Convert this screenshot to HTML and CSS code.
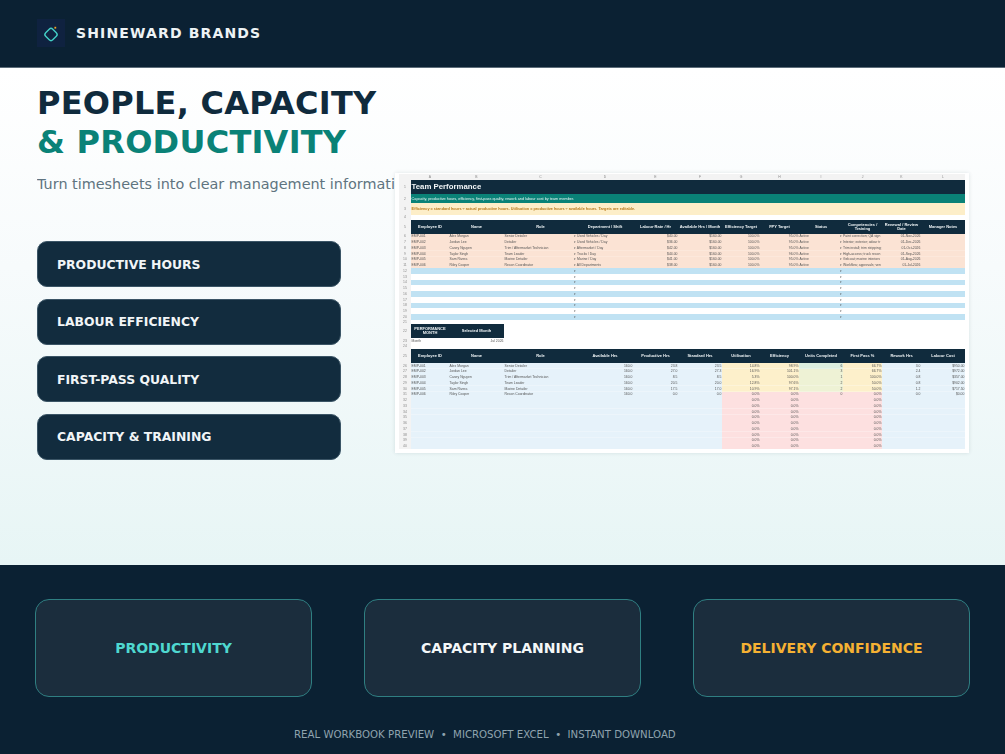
FILE: index.html
```html
<!DOCTYPE html>
<html lang="en">
<head>
  <meta charset="UTF-8">
  <title>People, Capacity &amp; Productivity</title>
  <link rel="stylesheet" href="styles.css">
</head>
<body>
<header class="topbar">
  <div class="logo">
    <svg viewBox="0 0 28 28" width="28" height="28">
      <rect x="9" y="10.5" width="10" height="10" rx="2.5" transform="rotate(45 14 15.5)" fill="none" stroke="#43cfc6" stroke-width="1.4"/>
      <rect x="17.4" y="7.8" width="1.8" height="1.8" fill="#f5a623"/>
    </svg>
  </div>
  <span class="brand">SHINEWARD BRANDS</span>
</header>

<main class="hero">
  <!-- left column -->
  <section class="intro">
    <h1>PEOPLE, CAPACITY<br><span class="accent">&amp; PRODUCTIVITY</span></h1>
    <p class="sub">Turn timesheets into clear management information</p>
    <ul class="pills">
      <li>PRODUCTIVE HOURS</li>
      <li>LABOUR EFFICIENCY</li>
      <li>FIRST-PASS QUALITY</li>
      <li>CAPACITY &amp; TRAINING</li>
    </ul>
  </section>

  <!-- workbook preview -->
  <section class="sheet">
    <table>
      <colgroup>
        <col class="c-n"><col class="c-a"><col class="c-b"><col class="c-c"><col class="c-d"><col class="c-e"><col class="c-f">
        <col class="c-g"><col class="c-h"><col class="c-i"><col class="c-j"><col class="c-k"><col class="c-l">
      </colgroup>
      <tr class="letters"><th></th><th>A</th><th>B</th><th>C</th><th>D</th><th>E</th><th>F</th><th>G</th><th>H</th><th>I</th><th>J</th><th>K</th><th>L</th></tr>
      <tr class="title"><th>1</th><td colspan="12">Team Performance</td></tr>
      <tr class="subtitle"><th>2</th><td colspan="12">Capacity, productive hours, efficiency, first-pass quality, rework and labour cost by team member.</td></tr>
      <tr class="note"><th>3</th><td colspan="12">Efficiency = standard hours ÷ actual productive hours. Utilisation = productive hours ÷ available hours. Targets are editable.</td></tr>
      <tr class="gap"><th>4</th><td colspan="12"></td></tr>
      <tr class="head"><th>5</th><td>Employee ID</td><td>Name</td><td>Role</td><td>Department / Shift</td><td>Labour Rate / Hr</td><td>Available Hrs / Month</td><td>Efficiency Target</td><td>FPY Target</td><td>Status</td><td>Competencies / Training</td><td>Renewal / Review Date</td><td>Manager Notes</td></tr>
      <tr class="row peach"><th>6</th><td>EMP-001</td><td>Alex Morgan</td><td>Senior Detailer</td><td class="dd">▾ Used Vehicles / Day</td><td class="r">$40.00</td><td class="r">$160.00</td><td class="r">100.0%</td><td class="r">95.0%</td><td>Active</td><td class="dd">▾ Paint correction; QA sign</td><td class="r">01-Nov-2026</td><td></td></tr>
      <tr class="row peach"><th>7</th><td>EMP-002</td><td>Jordan Lee</td><td>Detailer</td><td class="dd">▾ Used Vehicles / Day</td><td class="r">$36.00</td><td class="r">$160.00</td><td class="r">100.0%</td><td class="r">95.0%</td><td>Active</td><td class="dd">▾ Interior; exterior; odour tr</td><td class="r">01-Dec-2026</td><td></td></tr>
      <tr class="row peach"><th>8</th><td>EMP-003</td><td>Casey Nguyen</td><td>Trim / Aftermarket Technician</td><td class="dd">▾ Aftermarket / Day</td><td class="r">$42.00</td><td class="r">$160.00</td><td class="r">100.0%</td><td class="r">95.0%</td><td>Active</td><td class="dd">▾ Trim install; trim stripping;</td><td class="r">01-Oct-2026</td><td></td></tr>
      <tr class="row peach"><th>9</th><td>EMP-004</td><td>Taylor Singh</td><td>Team Leader</td><td class="dd">▾ Trucks / Day</td><td class="r">$44.00</td><td class="r">$160.00</td><td class="r">100.0%</td><td class="r">96.0%</td><td>Active</td><td class="dd">▾ High-access; truck recon</td><td class="r">01-Sep-2026</td><td></td></tr>
      <tr class="row peach"><th>10</th><td>EMP-005</td><td>Sam Rivera</td><td>Marine Detailer</td><td class="dd">▾ Marine / Day</td><td class="r">$41.00</td><td class="r">$160.00</td><td class="r">100.0%</td><td class="r">95.0%</td><td>Active</td><td class="dd">▾ Gelcoat; marine interiors</td><td class="r">01-Aug-2026</td><td></td></tr>
      <tr class="row peach"><th>11</th><td>EMP-006</td><td>Riley Cooper</td><td>Recon Coordinator</td><td class="dd">▾ All Departments</td><td class="r">$38.00</td><td class="r">$160.00</td><td class="r">100.0%</td><td class="r">95.0%</td><td>Active</td><td class="dd">▾ Workflow; approvals; ven</td><td class="r">01-Jul-2026</td><td></td></tr>
      <tr class="row sky"><th>12</th><td colspan="3"></td><td class="dd">▾</td><td colspan="5"></td><td class="dd" colspan="3">▾</td></tr>
      <tr class="row"><th>13</th><td colspan="3"></td><td class="dd">▾</td><td colspan="5"></td><td class="dd" colspan="3">▾</td></tr>
      <tr class="row sky"><th>14</th><td colspan="3"></td><td class="dd">▾</td><td colspan="5"></td><td class="dd" colspan="3">▾</td></tr>
      <tr class="row"><th>15</th><td colspan="3"></td><td class="dd">▾</td><td colspan="5"></td><td class="dd" colspan="3">▾</td></tr>
      <tr class="row sky"><th>16</th><td colspan="3"></td><td class="dd">▾</td><td colspan="5"></td><td class="dd" colspan="3">▾</td></tr>
      <tr class="row"><th>17</th><td colspan="3"></td><td class="dd">▾</td><td colspan="5"></td><td class="dd" colspan="3">▾</td></tr>
      <tr class="row sky"><th>18</th><td colspan="3"></td><td class="dd">▾</td><td colspan="5"></td><td class="dd" colspan="3">▾</td></tr>
      <tr class="row"><th>19</th><td colspan="3"></td><td class="dd">▾</td><td colspan="5"></td><td class="dd" colspan="3">▾</td></tr>
      <tr class="row sky"><th>20</th><td colspan="3"></td><td class="dd">▾</td><td colspan="5"></td><td class="dd" colspan="3">▾</td></tr>
      <tr class="gap"><th>21</th><td colspan="12"></td></tr>
      <tr class="head"><th>22</th><td>PERFORMANCE MONTH</td><td>Selected Month</td><td class="blank" colspan="10"></td></tr>
      <tr class="row"><th>23</th><td>Month</td><td class="r">Jul 2026</td><td colspan="10"></td></tr>
      <tr class="gap"><th>24</th><td colspan="12"></td></tr>
      <tr class="head"><th>25</th><td>Employee ID</td><td>Name</td><td>Role</td><td>Available Hrs</td><td>Productive Hrs</td><td>Standard Hrs</td><td>Utilisation</td><td>Efficiency</td><td>Units Completed</td><td>First Pass %</td><td>Rework Hrs</td><td>Labour Cost</td></tr>
      <tr class="row ice"><th>26</th><td>EMP-001</td><td>Alex Morgan</td><td>Senior Detailer</td><td class="r">160.0</td><td class="r">23.8</td><td class="r">23.5</td><td class="r amber">14.8%</td><td class="r amber">98.9%</td><td class="r mint">6</td><td class="r amber">66.7%</td><td class="r">3.0</td><td class="r">$950.00</td></tr>
      <tr class="row ice"><th>27</th><td>EMP-002</td><td>Jordan Lee</td><td>Detailer</td><td class="r">160.0</td><td class="r">27.0</td><td class="r">27.3</td><td class="r amber">16.9%</td><td class="r amber">101.1%</td><td class="r lime">3</td><td class="r amber">66.7%</td><td class="r">2.4</td><td class="r">$972.00</td></tr>
      <tr class="row ice"><th>28</th><td>EMP-003</td><td>Casey Nguyen</td><td>Trim / Aftermarket Technician</td><td class="r">160.0</td><td class="r">8.5</td><td class="r">8.5</td><td class="r amber">5.3%</td><td class="r amber">100.0%</td><td class="r lime">1</td><td class="r amber">100.0%</td><td class="r">0.8</td><td class="r">$357.00</td></tr>
      <tr class="row ice"><th>29</th><td>EMP-004</td><td>Taylor Singh</td><td>Team Leader</td><td class="r">160.0</td><td class="r">20.5</td><td class="r">20.0</td><td class="r amber">12.8%</td><td class="r amber">97.6%</td><td class="r lime">2</td><td class="r amber">50.0%</td><td class="r">0.8</td><td class="r">$902.00</td></tr>
      <tr class="row ice"><th>30</th><td>EMP-005</td><td>Sam Rivera</td><td>Marine Detailer</td><td class="r">160.0</td><td class="r">17.5</td><td class="r">17.0</td><td class="r amber">10.9%</td><td class="r amber">97.1%</td><td class="r lime">2</td><td class="r amber">50.0%</td><td class="r">1.2</td><td class="r">$717.50</td></tr>
      <tr class="row ice"><th>31</th><td>EMP-006</td><td>Riley Cooper</td><td>Recon Coordinator</td><td class="r">160.0</td><td class="r">0.0</td><td class="r">0.0</td><td class="r rose">0.0%</td><td class="r rose">0.0%</td><td class="r rose">0</td><td class="r rose">0.0%</td><td class="r">0.0</td><td class="r">$0.00</td></tr>
      <tr class="row ice"><th>32</th><td colspan="6"></td><td class="r rose">0.0%</td><td class="r rose">0.0%</td><td class="rose"></td><td class="r rose">0.0%</td><td colspan="2"></td></tr>
      <tr class="row ice"><th>33</th><td colspan="6"></td><td class="r rose">0.0%</td><td class="r rose">0.0%</td><td class="rose"></td><td class="r rose">0.0%</td><td colspan="2"></td></tr>
      <tr class="row ice"><th>34</th><td colspan="6"></td><td class="r rose">0.0%</td><td class="r rose">0.0%</td><td class="rose"></td><td class="r rose">0.0%</td><td colspan="2"></td></tr>
      <tr class="row ice"><th>35</th><td colspan="6"></td><td class="r rose">0.0%</td><td class="r rose">0.0%</td><td class="rose"></td><td class="r rose">0.0%</td><td colspan="2"></td></tr>
      <tr class="row ice"><th>36</th><td colspan="6"></td><td class="r rose">0.0%</td><td class="r rose">0.0%</td><td class="rose"></td><td class="r rose">0.0%</td><td colspan="2"></td></tr>
      <tr class="row ice"><th>37</th><td colspan="6"></td><td class="r rose">0.0%</td><td class="r rose">0.0%</td><td class="rose"></td><td class="r rose">0.0%</td><td colspan="2"></td></tr>
      <tr class="row ice"><th>38</th><td colspan="6"></td><td class="r rose">0.0%</td><td class="r rose">0.0%</td><td class="rose"></td><td class="r rose">0.0%</td><td colspan="2"></td></tr>
      <tr class="row ice"><th>39</th><td colspan="6"></td><td class="r rose">0.0%</td><td class="r rose">0.0%</td><td class="rose"></td><td class="r rose">0.0%</td><td colspan="2"></td></tr>
      <tr class="row ice"><th>40</th><td colspan="6"></td><td class="r rose">0.0%</td><td class="r rose">0.0%</td><td class="rose"></td><td class="r rose">0.0%</td><td colspan="2"></td></tr>
    </table>
  </section>
</main>

<footer class="bottom">
  <div class="cards">
    <div class="card teal">PRODUCTIVITY</div>
    <div class="card">CAPACITY PLANNING</div>
    <div class="card gold">DELIVERY CONFIDENCE</div>
  </div>
  <p class="strap">REAL WORKBOOK PREVIEW &nbsp;•&nbsp; MICROSOFT EXCEL &nbsp;•&nbsp; INSTANT DOWNLOAD</p>
</footer>
</body>
</html>
```

FILE: styles.css
```css
*{box-sizing:border-box}
body{margin:0;height:754px;overflow:hidden;display:flex;flex-direction:column;font-family:"DejaVu Sans",sans-serif;background:#0b2133}

/* top bar */
.topbar{height:68px;flex:none;display:flex;align-items:center;gap:11px;padding:0 37px 1px;background:#0b2133;border-bottom:1px solid #5d6d7a}
.logo{width:28px;height:28px;background:#0f2240}
.logo svg{display:block}
.brand{font-size:14px;font-weight:700;letter-spacing:1.15px;color:#eef3f5}

/* hero */
.hero{height:497px;flex:none;display:flex;align-items:flex-start;padding-left:37px;background:linear-gradient(180deg,#fff 0%,#f7fbfc 40%,#e7f5f5 100%)}
.intro{width:358px;flex:none;overflow:hidden}
h1{margin:16px 0 0;font-size:32px;line-height:39px;font-weight:700;letter-spacing:.25px;color:#102b3d;white-space:nowrap}
.accent{color:#0a8277}
.sub{margin:12px 0 0;font-size:14.4px;line-height:20px;color:#5f7480;white-space:nowrap}
.pills{list-style:none;margin:47px 0 0;padding:0;width:304px;display:flex;flex-direction:column;gap:11.6px}
.pills li{height:46px;display:flex;align-items:center;padding-left:19px;border-radius:10px;background:#122c3e;border:1px solid #3b5566;font-size:12.4px;font-weight:700;color:#f1f5f7}

/* workbook preview */
.sheet{width:574px;height:280px;flex:none;margin-top:105px;padding:1px 4px 0;background:#fff;box-shadow:0 0 4px rgba(16,43,61,.12)}
.sheet table{width:566px;table-layout:fixed;border-collapse:separate;border-spacing:0;font-family:"Liberation Sans",Arial,sans-serif;font-size:3.4px;line-height:4px;color:#555;filter:blur(.35px)}
.c-n{width:12px}.c-a{width:38px}.c-b{width:55px}.c-c{width:73px}.c-d{width:56px}.c-e{width:45px}.c-f{width:44px}
.c-g{width:38px}.c-h{width:39px}.c-i{width:44px}.c-j{width:39px}.c-k{width:39px}.c-l{width:44px}
.sheet th{padding:0;font-weight:400;text-align:center;background:#f3f3f3;color:#888}
.sheet td{padding:0 .6px;white-space:nowrap;overflow:hidden}
.sheet td.dd{text-indent:-3.5px;overflow:visible}
.sheet .r{text-align:right}
.letters th{height:6px}
.title th,.title td{height:14px}
.title td{background:#102b3d;color:#f1f5f7;font-size:7.8px;font-weight:700;line-height:10px}
.subtitle th,.subtitle td{height:9px}
.subtitle td{background:#0a8277;color:#e8f5f3;font-size:3.8px}
.note th,.note td{height:12px}
.note td{background:#fdeec8;color:#b8791a;font-size:3.8px;font-weight:700}
.gap th,.gap td{height:4.6px}
.head th,.head td{height:14px}
.head td{background:#102b3d;color:#eef3f5;font-size:4px;font-weight:700;text-align:center;white-space:normal}
.head td.blank{background:#fff}
.row th,.row td{height:5.75px}
.peach td{background:#fbe3d4 linear-gradient(#fff5,#fff5) bottom/100% .5px no-repeat}
.sky td{background:#c0e2f3}
.ice td{background:#e6f2fa linear-gradient(#fff8,#fff8) bottom/100% .5px no-repeat}
.ice td.amber{background-color:#fdf0cb}
.ice td.mint{background-color:#dcefe0}
.ice td.lime{background-color:#eef2d5}
.ice td.rose{background-color:#fde0e0}

/* footer */
.bottom{flex:1;padding:34px 35px 0;background:#0b2133}
.cards{display:flex;gap:52px}
.card{width:277px;height:98px;display:flex;align-items:center;justify-content:center;border:1px solid #2f7f82;border-radius:14px;background:#1b2d3d;font-size:14px;font-weight:700;color:#f4f7f8}
.card.teal{color:#4fd8d0}
.card.gold{color:#f5b133}
.strap{margin:31px 0 0;padding-left:259px;font-size:10.2px;line-height:14px;color:#8fa3ae;white-space:nowrap}
```
